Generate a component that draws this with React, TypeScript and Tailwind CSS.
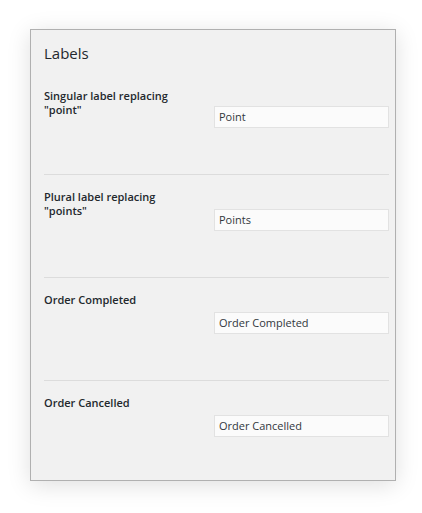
import React from "react";

const font = { fontFamily: '"Open Sans", "Noto Sans", sans-serif' };

function Row({ label, value, last, first }: { label: React.ReactNode; value: string; last?: boolean; first?: boolean }) {
  return (
    <div className={last ? "pt-[15px] pb-[43px]" : "pt-[15px] pb-[46px] border-b border-[#dcdcdc]"}>
      <div className="flex items-start">
        <div className="w-[170px] shrink-0 text-[11px] leading-[14px] font-semibold text-[#23282d]">{label}</div>
        <div
          className={
            (first ? "mt-[17px] " : "mt-[19px] ") +
            "w-[175px] h-[22px] border border-[#e2e2e2] bg-[#fbfbfb] pl-[4px] flex items-center text-[11px] text-[#32373c]"
          }
        >
          {value}
        </div>
      </div>
    </div>
  );
}

export default function App() {
  return (
    <div className="w-[422px] h-[513px] bg-white pt-[29px] pl-[30px]" style={font}>
      <div className="w-[366px] border border-[#b0b0b0] bg-[#f1f1f1] pl-[13px] pr-[6px] pt-[13px] shadow-[0_4px_22px_rgba(0,0,0,0.13)]">
        <h2 className="text-[15px] leading-[20px] font-normal text-[#23282d] mb-[11px]">Labels</h2>
        <Row first label={<>Singular label replacing<br />"point"</>} value="Point" />
        <Row label={<>Plural label replacing<br />"points"</>} value="Points" />
        <Row label="Order Completed" value="Order Completed" />
        <Row label="Order Cancelled" value="Order Cancelled" last />
      </div>
    </div>
  );
}
